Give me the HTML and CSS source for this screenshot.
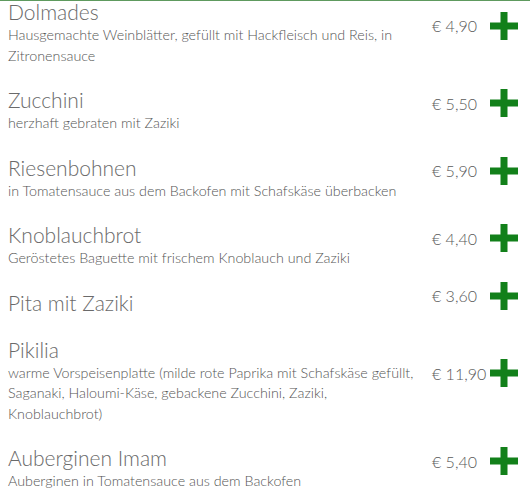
FILE: index.html
```html
<!DOCTYPE html>
<html lang="de">
<head>
<meta charset="utf-8">
<title>Vorspeisen</title>
<link rel="stylesheet" href="styles.css">
</head>
<body>
<div class="menu">
  <div class="item">
    <div class="info">
      <div class="name">Dolmades</div>
      <div class="desc">Hausgemachte Weinblätter, gefüllt mit Hackfleisch und Reis, in Zitronensauce</div>
    </div>
    <div class="buy"><span class="price">€ 4,90</span><svg class="plus" viewBox="0 0 28 28"><rect x="10.5" y="0" width="7" height="28"/><rect x="0" y="10.5" width="28" height="7"/></svg></div>
  </div>
  <div class="item">
    <div class="info">
      <div class="name">Zucchini</div>
      <div class="desc">herzhaft gebraten mit Zaziki</div>
    </div>
    <div class="buy"><span class="price">€ 5,50</span><svg class="plus" viewBox="0 0 28 28"><rect x="10.5" y="0" width="7" height="28"/><rect x="0" y="10.5" width="28" height="7"/></svg></div>
  </div>
  <div class="item">
    <div class="info">
      <div class="name">Riesenbohnen</div>
      <div class="desc">in Tomatensauce aus dem Backofen mit Schafskäse überbacken</div>
    </div>
    <div class="buy"><span class="price">€ 5,90</span><svg class="plus" viewBox="0 0 28 28"><rect x="10.5" y="0" width="7" height="28"/><rect x="0" y="10.5" width="28" height="7"/></svg></div>
  </div>
  <div class="item">
    <div class="info">
      <div class="name">Knoblauchbrot</div>
      <div class="desc">Geröstetes Baguette mit frischem Knoblauch und Zaziki</div>
    </div>
    <div class="buy"><span class="price">€ 4,40</span><svg class="plus" viewBox="0 0 28 28"><rect x="10.5" y="0" width="7" height="28"/><rect x="0" y="10.5" width="28" height="7"/></svg></div>
  </div>
  <div class="item">
    <div class="info">
      <div class="name">Pita mit Zaziki</div>
    </div>
    <div class="buy"><span class="price">€ 3,60</span><svg class="plus" viewBox="0 0 28 28"><rect x="10.5" y="0" width="7" height="28"/><rect x="0" y="10.5" width="28" height="7"/></svg></div>
  </div>
  <div class="item">
    <div class="info">
      <div class="name">Pikilia</div>
      <div class="desc">warme Vorspeisenplatte (milde rote Paprika mit Schafskäse gefüllt, Saganaki, Haloumi-Käse, gebackene Zucchini, Zaziki, Knoblauchbrot)</div>
    </div>
    <div class="buy"><span class="price">€ 11,90</span><svg class="plus" viewBox="0 0 28 28"><rect x="10.5" y="0" width="7" height="28"/><rect x="0" y="10.5" width="28" height="7"/></svg></div>
  </div>
  <div class="item">
    <div class="info">
      <div class="name">Auberginen Imam</div>
      <div class="desc">Auberginen in Tomatensauce aus dem Backofen</div>
    </div>
    <div class="buy"><span class="price">€ 5,40</span><svg class="plus" viewBox="0 0 28 28"><rect x="10.5" y="0" width="7" height="28"/><rect x="0" y="10.5" width="28" height="7"/></svg></div>
  </div>
</div>
</body>
</html>
```

FILE: styles.css
```css
body {
  margin: 0;
  background: #fff;
  border-top: 1px solid #5e9a5e;
  font-family: Lato, "Open Sans", sans-serif;
  font-weight: 300;
}
.menu {
  margin-top: -16px;
  padding: 0 12px 0 8px;
}
.item {
  display: flex;
  align-items: center;
  padding: 14px 0 7px;
}
.info {
  flex: 1;
  min-width: 0;
}
.name {
  font-size: 21px;
  line-height: 26px;
  color: #6a6a6a;
}
.desc {
  font-size: 14.3px;
  line-height: 20.5px;
  color: #555;
}
.buy {
  display: flex;
  align-items: center;
  margin-left: 7px;
  margin-top: -14px;
}
.price {
  width: 58px;
  font-size: 16px;
  color: #5a5a5a;
}
.plus {
  width: 28px;
  height: 28px;
  fill: #12801a;
}
```
